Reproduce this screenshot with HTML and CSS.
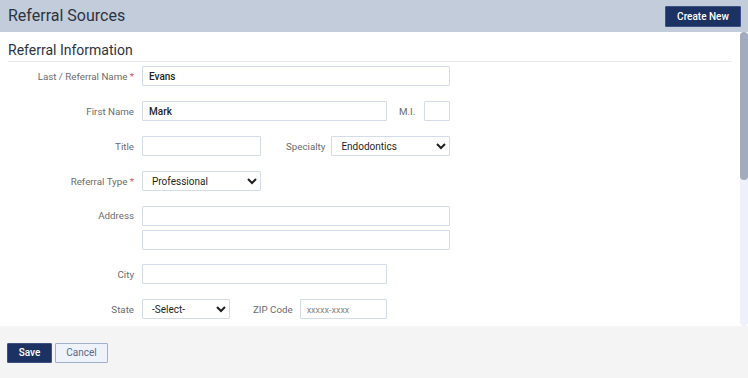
FILE: index.html
```html
<!DOCTYPE html>
<html>
<head>
<meta charset="utf-8">
<link rel="stylesheet" href="styles.css">
</head>
<body>
<div class="app">
  <header class="topbar">
    <h1 class="page-title">Referral Sources</h1>
    <button class="btn btn-primary btn-create">Create New</button>
  </header>
  <main class="panel">
    <div class="panel-body">
      <h2 class="section-title">Referral Information</h2>
      <div class="form">
        <div class="row">
          <label class="lbl">Last / Referral Name <span class="req">*</span></label>
          <input class="field w-wide" type="text" value="Evans">
        </div>
        <div class="row">
          <label class="lbl">First Name</label>
          <input class="field w-med" type="text" value="Mark">
          <label class="sublbl sub-mi">M.I.</label>
          <input class="field w-mi" type="text" value="">
        </div>
        <div class="row">
          <label class="lbl">Title</label>
          <input class="field w-small" type="text" value="">
          <label class="sublbl sub-spec">Specialty</label>
          <select class="field sel w-small">
            <option>Endodontics</option>
          </select>
        </div>
        <div class="row">
          <label class="lbl">Referral Type <span class="req">*</span></label>
          <select class="field sel w-small">
            <option>Professional</option>
          </select>
        </div>
        <div class="row row-top">
          <label class="lbl">Address</label>
          <div class="stack">
            <input class="field w-wide" type="text" value="">
            <input class="field w-wide" type="text" value="">
          </div>
        </div>
        <div class="row row-city">
          <label class="lbl">City</label>
          <input class="field w-med" type="text" value="">
        </div>
        <div class="row">
          <label class="lbl">State</label>
          <select class="field sel w-state">
            <option>-Select-</option>
          </select>
          <label class="sublbl sub-zip">ZIP Code</label>
          <input class="field w-zip" type="text" placeholder="xxxxx-xxxx">
        </div>
      </div>
    </div>
    <div class="scrollbar"><div class="thumb"></div></div>
  </main>
  <footer class="footer">
    <button class="btn btn-primary btn-save">Save</button>
    <button class="btn btn-cancel">Cancel</button>
  </footer>
</div>
</body>
</html>
```

FILE: styles.css
```css
* { box-sizing: border-box; }
html, body { margin: 0; padding: 0; }
body {
  font-family: Roboto, "Liberation Sans", Arial, sans-serif;
  background: #f4f4f4;
  color: #2c3440;
}
.app {
  height: 378px;
  display: flex;
  flex-direction: column;
}
.topbar {
  height: 32px;
  flex: none;
  background: #c3ccdb;
  display: flex;
  align-items: center;
  justify-content: space-between;
  padding: 0 7px 0 8px;
}
.page-title {
  margin: 0;
  font-size: 16px;
  font-weight: 400;
  line-height: 32px;
  color: #2c3440;
}
.btn {
  font-family: inherit;
  font-size: 10px;
  line-height: 1;
  height: 20px;
  padding: 0;
  cursor: pointer;
  border-radius: 1px;
}
.btn-primary {
  background: #1b3262;
  color: #ffffff;
  border: 1px solid #3d5283;
  font-weight: 500;
}
.btn-create {
  width: 76px;
  height: 21px;
  margin-top: 1px;
}
.panel {
  flex: none;
  height: 294px;
  background: #ffffff;
  display: flex;
}
.panel-body {
  flex: 1;
  padding: 0 8px;
}
.section-title {
  margin: 0;
  padding: 9px 0 2px;
  font-size: 14px;
  font-weight: 400;
  line-height: 18px;
  color: #2c3440;
  border-bottom: 1px solid #e6e9ee;
}
.form {
  margin-top: 4px;
  display: flex;
  flex-direction: column;
  gap: 15px;
}
.row {
  display: flex;
  align-items: center;
  height: 20px;
}
.row-top {
  align-items: flex-start;
  height: auto;
}
.row-top .lbl { line-height: 20px; }
.row-city { margin-top: -1px; }
.stack {
  display: flex;
  flex-direction: column;
  gap: 4px;
}
.lbl {
  width: 126px;
  margin-right: 8px;
  text-align: right;
  font-size: 9.75px;
  color: #6b6b6b;
  white-space: nowrap;
  flex: none;
}
.req { color: #d9534f; }
.sublbl {
  font-size: 9.75px;
  color: #6b6b6b;
  margin-right: 8px;
  white-space: nowrap;
}
.sub-mi { margin-left: 12px; margin-right: 9px; }
.sub-spec { margin-left: 25px; margin-right: 6px; }
.sub-zip { margin-left: 23px; margin-right: 7px; }
.field {
  height: 20px;
  border: 1px solid #d3dce8;
  border-radius: 1px;
  background: #ffffff;
  font-family: inherit;
  font-size: 10px;
  font-weight: 500;
  color: #1f1f1f;
  padding: 0 6px;
  outline: none;
  flex: none;
  margin: 0;
}
.field::placeholder {
  color: #8a8a8a;
  font-weight: 400;
  font-size: 9px;
}
.sel {
  padding: 0 4px 0 5px;
  font-weight: 400;
  color: #1f1f1f;
}
.w-wide { width: 308px; }
.w-med { width: 245px; }
.w-small { width: 119px; }
.w-mi { width: 26px; }
.w-state { width: 88px; }
.w-zip { width: 87px; }
.scrollbar {
  width: 8px;
  flex: none;
  background: #eef1f9;
  border-radius: 4px;
}
.thumb {
  height: 148px;
  background: #a3abbf;
  border-radius: 4px;
}
.footer {
  flex: 1;
  background: #f4f4f4;
  display: flex;
  align-items: flex-start;
  gap: 3px;
  padding: 17px 0 0 7px;
}
.btn-save { width: 45px; }
.btn-cancel {
  width: 53px;
  background: #eef3fb;
  border: 1px solid #9fb0c8;
  color: #5a6a88;
}
```
